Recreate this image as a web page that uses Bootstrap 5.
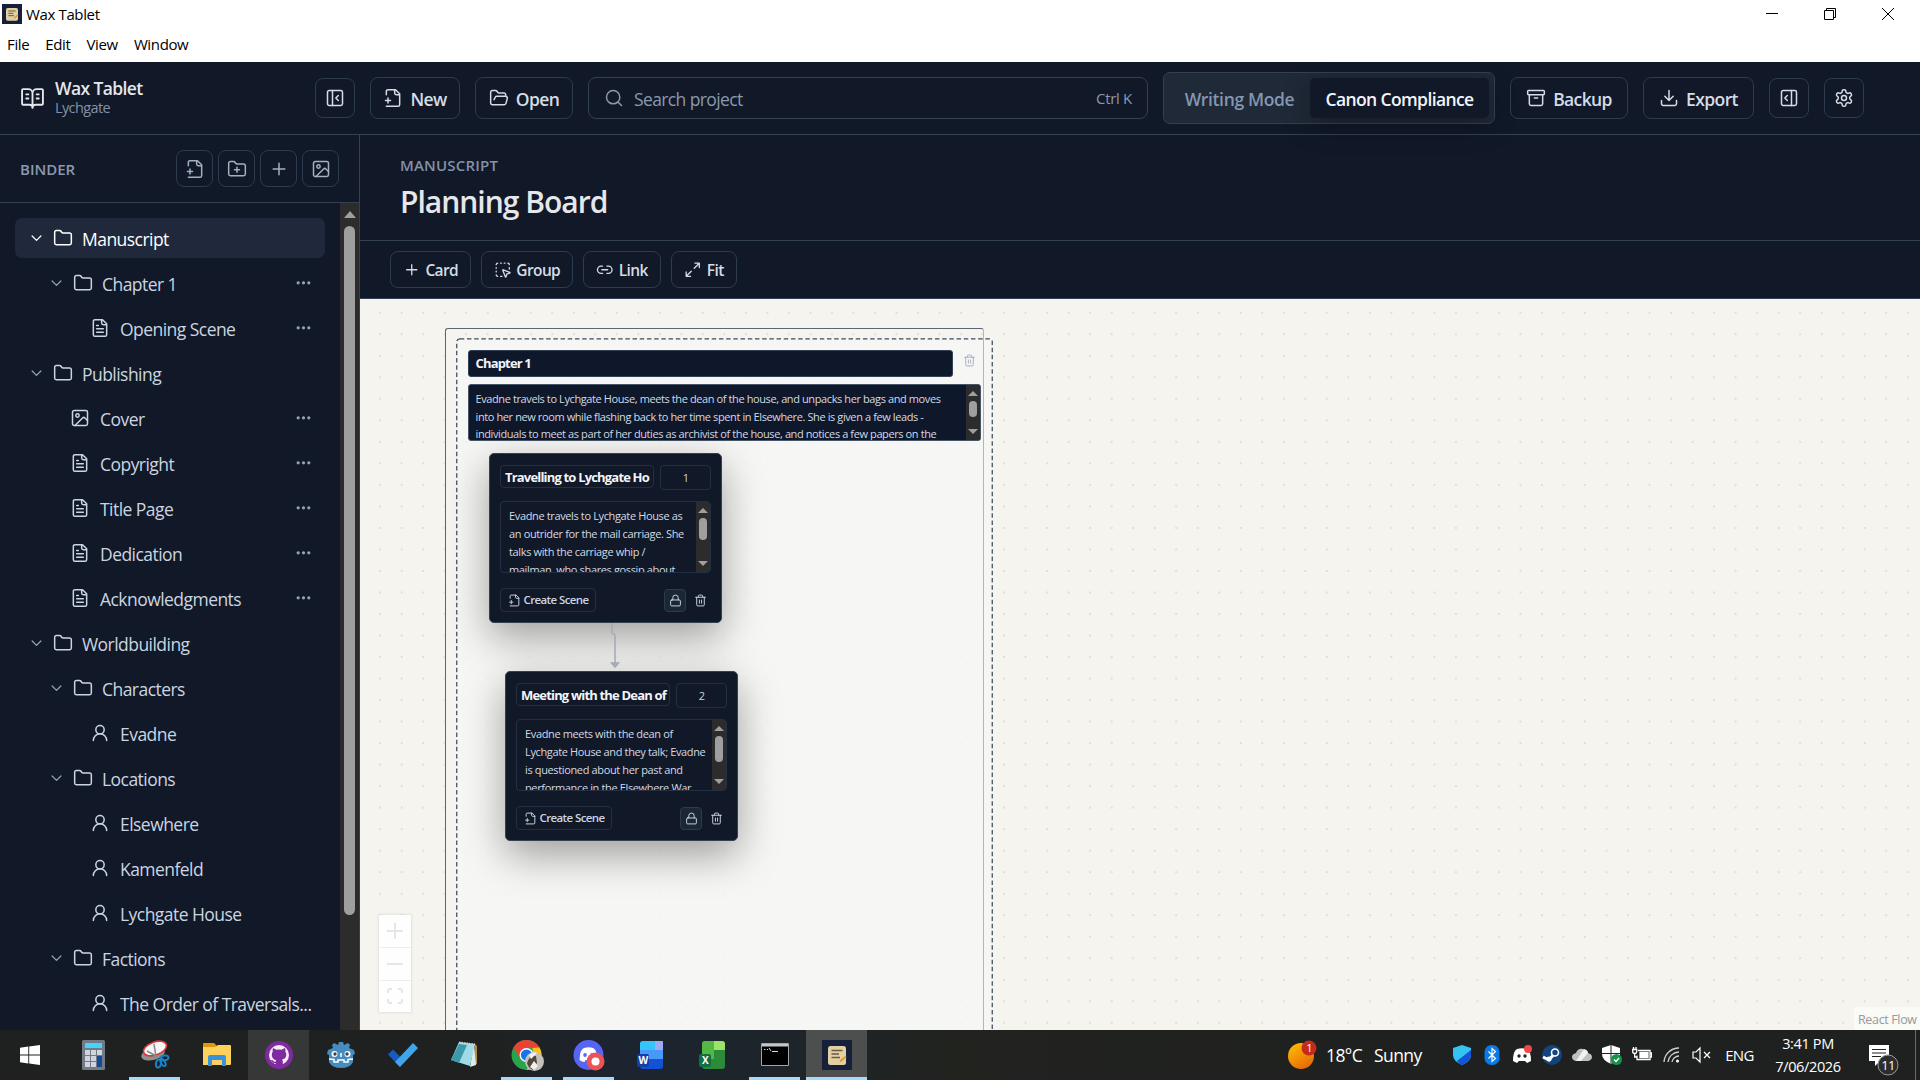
<!DOCTYPE html>
<html lang="en">
<head>
    <meta charset="UTF-8">
    <meta name="viewport" content="width=device-width, initial-scale=1.0">
    <title>Wax Tablet</title>
    <link href="https://cdn.jsdelivr.net/npm/bootstrap@5.3.0/dist/css/bootstrap.min.css" rel="stylesheet">
    <style>
        body {
            width: 1920px;
            height: 1080px;
            overflow: hidden;
            font-family: "Open Sans", "Noto Sans", sans-serif;
            font-size: 17.5px;
            line-height: 1.2;
            letter-spacing: -0.035em;
            color: #cbd5e1;
            background: #111827;
        }
        svg { display: block; flex: none; }
        .ic { width: 20px; height: 20px; fill: none; stroke: currentColor; stroke-width: 1.8; stroke-linecap: round; stroke-linejoin: round; }
        .ic-xl { width: 25px; height: 25px; }
        .ic-md { width: 17.5px; height: 17.5px; }
        .ic-sm { width: 13px; height: 13px; }

        /* window frame */
        .titlebar { height: 62px; background: #fff; color: #000; font-size: 15px; letter-spacing: -0.024em; }
        .titlebar-top { height: 28px; padding: 0 26px 0 2px; }
        .titlebar-menu { padding: 7px 0 0 7px; gap: 16px; }
        .win-controls { gap: 46px; }

        /* app header */
        .app-header { height: 73px; padding: 0 55px 0 20px; border-bottom: 1px solid #334155; }
        .brand { width: 295px; gap: 10px; color: #e5e7eb; }
        .brand-name { font-size: 17.5px; font-weight: 600; line-height: 20px; margin-top: -1px; }
        .brand-sub { font-size: 14.5px; line-height: 19px; color: #8391a8; }
        .header-tools { gap: 15px; }
        .tool-btn { height: 42px; padding: 0; border: 1px solid #2d3b4f; border-radius: 8px; color: #d5dce6; font-size: 17.5px; font-weight: 600; line-height: 1; letter-spacing: inherit; display: flex; align-items: center; justify-content: center; gap: 7px; flex: none; }
        .tool-btn span { padding-top: 3px; }
        .tool-sq { width: 40px; height: 40px; }
        .w-new { width: 90px; } .w-open { width: 98px; } .w-backup { width: 118px; } .w-export { width: 111px; }
        .searchbox { width: 560px; height: 42px; padding: 0 15px 0 15px; border: 1px solid #334155; border-radius: 8px; color: #8b99ae; }
        .search-hint { padding: 3px 0 0 10px; }
        .hotkey { font-size: 15px; letter-spacing: -0.02em; }
        .segmented { width: 332px; height: 52px; padding: 5px; border: 1px solid #334155; border-radius: 7px; background: #1f2937; font-weight: 600; }
        .segmented div { height: 40px; display: flex; align-items: center; justify-content: center; padding-top: 3px; }
        .seg-off { width: 141px; color: #8496b0; letter-spacing: -0.02em; }
        .seg-on { width: 179px; background: #111827; border-radius: 5px; color: #f1f5f9; box-shadow: 0 8px 28px rgba(0, 0, 0, .28); }

        /* binder */
        .main-area { height: 895px; }
        .binder { width: 360px; border-right: 1px solid #334155; }
        .binder-head { height: 68px; padding: 0 20px; border-bottom: 1px solid #334155; color: #8b99ae; font-size: 15px; font-weight: 600; letter-spacing: 0; }
        .binder-tools { gap: 5px; }
        .binder-btn { width: 37px; height: 37px; color: #a4b0c2; }
        .tree { width: 340px; padding: 15px 15px 0; gap: 5px; }
        .tree-row { height: 40px; padding-right: 13px; border-radius: 7px; display: flex; align-items: center; flex: none; white-space: nowrap; letter-spacing: -0.031em; }
        .tree-row span { padding-top: 3px; flex-grow: 1; }
        .tree-row .chev { width: 15px; height: 15px; color: #94a3b8; margin-right: 9px; }
        .tree-row .kind { margin-right: 10px; }
        .tree-row .chev + .kind { margin-right: 9px; }
        .tree-row .dots { width: 17px; height: 17px; color: #94a3b8; }
        .lv0 { padding-left: 14px; }
        .lv1 { padding-left: 34px; }
        .leaf1 { padding-left: 55px; }
        .leaf2 { padding-left: 75px; }
        .tree-row.current { background: #1f293b; color: #fff; }
        .tree-row.current .chev { color: #fff; }
        .scroll-track { width: 19px; background: #2c2c2c; padding-top: 8px; display: flex; flex-direction: column; align-items: center; }
        .scroll-thumb { width: 11px; height: 689px; margin-top: 8px; border-radius: 6px; background: #9f9f9f; }
        .arrow-up { width: 0; height: 0; border: 6.5px solid transparent; border-top: 0; border-bottom: 7px solid #9f9f9f; }
        .arrow-down { width: 0; height: 0; border: 6.5px solid transparent; border-bottom: 0; border-top: 7px solid #9f9f9f; }

        /* page heading and board toolbar */
        .page-head { height: 106px; padding: 20px 40px 0; border-bottom: 1px solid #334155; }
        .eyebrow { font-size: 15px; font-weight: 600; color: #8391a8; line-height: 20px; letter-spacing: 0.012em; }
        .page-title { font-size: 30px; font-weight: 600; line-height: 36px; color: #e5e7eb; margin: 9px 0 0; letter-spacing: -0.033em; }
        .board-tools { height: 58px; padding: 10px 30px 0; gap: 10px; border-bottom: 1px solid #334155; }
        .board-tools .tool-btn { height: 37px; font-size: 15.5px; gap: 5px; }
        .w-card { width: 81px; } .w-group { width: 92px; } .w-link { width: 78px; } .w-fit { width: 66px; }

        /* canvas */
        .board { height: 731px; background-color: #f5f4ef; }
        .board-dots { inset: 0; background-image: radial-gradient(circle, #dfdedd 0.7px, transparent 1.1px); background-size: 21.52px 21.52px; background-position: 9.4px 3px; }
        .node-frame { left: 85px; top: 29px; width: 539px; height: 720px; border: 1.5px solid #5f6474; border-right-color: #b4b5bb; border-radius: 3px; }
        .node-group { left: 96px; top: 39px; width: 537px; height: 720px; background: rgba(246, 246, 245, .8); }
        .group-title { left: 107.5px; top: 51px; width: 485px; height: 27px; padding: 5px 7px; background: #0f172a; border: 1px solid #334155; border-radius: 3px; color: #f1f5f9; font-size: 13px; font-weight: 700; letter-spacing: -0.064em; }
        .group-del { left: 603px; top: 55px; color: #a5b1c2; }
        .group-text { left: 107.5px; top: 85px; width: 513.5px; height: 57px; background: #0f172a; border: 1px solid #475569; border-radius: 3px; overflow: hidden; color: #d3dae4; font-size: 11px; line-height: 17.6px; letter-spacing: -0.036em; white-space: nowrap; }
        .group-text p { padding: 5px 0 0 7px; margin: 0; }
        .mini-track { width: 14px; background: #2c2c2c; padding: 6px 0; display: flex; flex-direction: column; align-items: center; flex: none; }
        .mini-track .arrow-up { border-width: 0 5px 5px; }
        .mini-track .arrow-down { border-width: 5px 5px 0; margin-top: auto; }
        .mini-thumb { width: 8px; margin-top: 5px; border-radius: 4px; background: #9f9f9f; }
        .scene { width: 233px; height: 170px; padding: 11px 10px 0; background: #111827; border: 1px solid #334155; border-radius: 5px; box-shadow: 0 14px 40px rgba(0, 0, 0, .36); }
        .scene-a { left: 129px; top: 154px; }
        .scene-b { left: 145px; top: 372px; }
        .field { border: 1px solid #233044; border-radius: 4px; }
        .scene-title { width: 154px; height: 23px; padding: 3px 4px; overflow: hidden; white-space: nowrap; color: #f1f5f9; font-size: 13px; line-height: 17px; font-weight: 700; letter-spacing: -0.063em; }
        .scene-no { width: 51px; height: 25px; font-size: 11px; padding-top: 5px; text-align: center; }
        .scene-text { height: 72px; margin-top: 11px; overflow: hidden; font-size: 11px; line-height: 18px; letter-spacing: -0.033em; white-space: nowrap; color: #d3dae4; }
        .scene-text p { margin: 0; padding: 5px 0 0 8px; }
        .scene-foot { margin-top: 15px; gap: 8px; }
        .create-btn { width: 96px; height: 24px; font-size: 11.5px; gap: 3px; font-weight: 600; }
        .lock-btn { width: 22px; height: 23px; background: #1c2736; border: 1px solid #2d3b4f; border-radius: 4px; display: flex; align-items: center; justify-content: center; }
        .edge-line { left: 245px; top: 324px; }
        .zoom-ctl { left: 19px; top: 616px; width: 32px; height: 97px; background: #fefefe; box-shadow: 0 0 2px 1px rgba(0, 0, 0, .08); color: #e5e6ea; }
        .zoom-ctl div { height: 32.3px; display: flex; align-items: center; justify-content: center; }
        .zoom-ctl div + div { border-top: 1px solid #eee; }
        .attribution { right: 0; bottom: 0; width: 66px; height: 23px; padding: 5px 0 0 4px; background: rgba(255, 255, 255, .5); color: #999; font-size: 12.5px; letter-spacing: -0.028em; }

        /* taskbar */
        .taskbar { height: 50px; background: linear-gradient(90deg, #1f2121 0, #1f2121 26%, #1c2430 32%, #1d242b 40%, #22231f 50%, #1f2120 70%, #1f2120 100%); color: #fff; }
        .task { width: 61px; margin-right: 1px; display: flex; align-items: center; justify-content: center; flex: none; }
        .task svg { width: 30px; height: 30px; }
        .task-start { width: 60px; margin-right: 2px; }
        .task-start svg { width: 20px; height: 20px; }
        .task.open-app { background: linear-gradient(#a6d8f7, #a6d8f7) center bottom / 51px 3px no-repeat; }
        .task.hot { background-color: #363737; }
        .task.front { background: linear-gradient(#a6d8f7, #a6d8f7) center bottom / 61px 3px no-repeat #4d4e4e; }
        .weather { width: 143px; gap: 8px; font-size: 17.5px; }
        .weather-sky { margin-left: 4px; }
        .tray-ic { width: 30px; display: flex; justify-content: center; }
        .tray-ic svg { width: 20px; height: 20px; }
        .lang { width: 47px; padding-right: 2px; font-size: 15px; text-align: center; }
        .clock { width: 88px; font-size: 14.5px; line-height: 23.5px; text-align: center; letter-spacing: -0.025em; }
        .notif { margin-left: 9px; }
    </style>
</head>
<body class="d-flex flex-column">
    <svg width="0" height="0" class="position-absolute">
        <symbol id="book" viewBox="0 0 24 24"><path d="M12 7v14M16 12h2M16 8h2M3 18a1 1 0 0 1-1-1V4a1 1 0 0 1 1-1h5a4 4 0 0 1 4 4 4 4 0 0 1 4-4h5a1 1 0 0 1 1 1v13a1 1 0 0 1-1 1h-6a3 3 0 0 0-3 3 3 3 0 0 0-3-3zM6 12h2M6 8h2"/></symbol>
        <symbol id="panel-left" viewBox="0 0 24 24"><rect width="18" height="18" x="3" y="3" rx="2"/><path d="M9 3v18M16 15l-3-3 3-3"/></symbol>
        <symbol id="panel-right" viewBox="0 0 24 24"><rect width="18" height="18" x="3" y="3" rx="2"/><path d="M15 3v18M10 15l-3-3 3-3"/></symbol>
        <symbol id="file-plus" viewBox="0 0 24 24"><path d="M4 22h14a2 2 0 0 0 2-2V7l-5-5H6a2 2 0 0 0-2 2v4M14 2v4a2 2 0 0 0 2 2h4M3 15h6M6 12v6"/></symbol>
        <symbol id="folder-open" viewBox="0 0 24 24"><path d="m6 14 1.5-2.9A2 2 0 0 1 9.24 10H20a2 2 0 0 1 1.94 2.5l-1.54 6a2 2 0 0 1-1.95 1.5H4a2 2 0 0 1-2-2V5a2 2 0 0 1 2-2h3.9a2 2 0 0 1 1.69.9l.81 1.2a2 2 0 0 0 1.67.9H18a2 2 0 0 1 2 2v2"/></symbol>
        <symbol id="folder" viewBox="0 0 24 24"><path d="M20 20a2 2 0 0 0 2-2V8a2 2 0 0 0-2-2h-7.9a2 2 0 0 1-1.69-.9L9.6 3.9A2 2 0 0 0 7.93 3H4a2 2 0 0 0-2 2v13a2 2 0 0 0 2 2Z"/></symbol>
        <symbol id="folder-plus" viewBox="0 0 24 24"><path d="M20 20a2 2 0 0 0 2-2V8a2 2 0 0 0-2-2h-7.9a2 2 0 0 1-1.69-.9L9.6 3.9A2 2 0 0 0 7.93 3H4a2 2 0 0 0-2 2v13a2 2 0 0 0 2 2ZM12 10v6M9 13h6"/></symbol>
        <symbol id="plus" viewBox="0 0 24 24"><path d="M5 12h14M12 5v14"/></symbol>
        <symbol id="search" viewBox="0 0 24 24"><circle cx="11" cy="11" r="8"/><path d="m21 21-4.3-4.3"/></symbol>
        <symbol id="archive" viewBox="0 0 24 24"><rect width="20" height="5" x="2" y="3" rx="1"/><path d="M4 8v11a2 2 0 0 0 2 2h12a2 2 0 0 0 2-2V8M10 12h4"/></symbol>
        <symbol id="download" viewBox="0 0 24 24"><path d="M21 15v4a2 2 0 0 1-2 2H5a2 2 0 0 1-2-2v-4M7 10l5 5 5-5M12 15V3"/></symbol>
        <symbol id="gear" viewBox="0 0 24 24"><path d="M12.22 2h-.44a2 2 0 0 0-2 2v.18a2 2 0 0 1-1 1.73l-.43.25a2 2 0 0 1-2 0l-.15-.08a2 2 0 0 0-2.73.73l-.22.38a2 2 0 0 0 .73 2.73l.15.1a2 2 0 0 1 1 1.72v.51a2 2 0 0 1-1 1.74l-.15.09a2 2 0 0 0-.73 2.73l.22.38a2 2 0 0 0 2.73.73l.15-.08a2 2 0 0 1 2 0l.43.25a2 2 0 0 1 1 1.73V20a2 2 0 0 0 2 2h.44a2 2 0 0 0 2-2v-.18a2 2 0 0 1 1-1.73l.43-.25a2 2 0 0 1 2 0l.15.08a2 2 0 0 0 2.73-.73l.22-.39a2 2 0 0 0-.73-2.73l-.15-.08a2 2 0 0 1-1-1.74v-.5a2 2 0 0 1 1-1.74l.15-.09a2 2 0 0 0 .73-2.73l-.22-.38a2 2 0 0 0-2.73-.73l-.15.08a2 2 0 0 1-2 0l-.43-.25a2 2 0 0 1-1-1.73V4a2 2 0 0 0-2-2z"/><circle cx="12" cy="12" r="3"/></symbol>
        <symbol id="image" viewBox="0 0 24 24"><rect width="18" height="18" x="3" y="3" rx="2"/><circle cx="9" cy="9" r="2"/><path d="m21 15-3.086-3.086a2 2 0 0 0-2.828 0L6 21"/></symbol>
        <symbol id="file-text" viewBox="0 0 24 24"><path d="M15 2H6a2 2 0 0 0-2 2v16a2 2 0 0 0 2 2h12a2 2 0 0 0 2-2V7ZM14 2v4a2 2 0 0 0 2 2h4M10 9H8M16 13H8M16 17H8"/></symbol>
        <symbol id="person" viewBox="0 0 24 24"><circle cx="12" cy="8" r="5"/><path d="M20 21a8 8 0 0 0-16 0"/></symbol>
        <symbol id="chevron" viewBox="0 0 24 24"><path d="m5 8 7 7 7-7" stroke-width="2"/></symbol>
        <symbol id="dots" viewBox="0 0 24 24"><g fill="currentColor"><circle cx="12" cy="11" r="1.4"/><circle cx="19.500" cy="11" r="1.4"/><circle cx="4.500" cy="11" r="1.4"/></g></symbol>
        <symbol id="select" viewBox="0 0 24 24"><path d="M12.034 12.681a.498.498 0 0 1 .647-.647l9 3.5a.5.5 0 0 1-.033.943l-3.444 1.068a1 1 0 0 0-.66.66l-1.067 3.443a.5.5 0 0 1-.943.033zM5 3a2 2 0 0 0-2 2M19 3a2 2 0 0 1 2 2M5 21a2 2 0 0 1-2-2M9 3h1M9 21h2M14 3h1M3 9v1M21 9v2M3 14v1"/></symbol>
        <symbol id="link" viewBox="0 0 24 24"><path d="M9 17H7A5 5 0 0 1 7 7h2M15 7h2a5 5 0 1 1 0 10h-2M8 12h8"/></symbol>
        <symbol id="expand" viewBox="0 0 24 24"><path d="M15 3h6v6M9 21H3v-6M21 3l-7 7M3 21l7-7"/></symbol>
        <symbol id="trash" viewBox="0 0 24 24"><path d="M3 6h18M19 6v14a2 2 0 0 1-2 2H7a2 2 0 0 1-2-2V6M8 6V4a2 2 0 0 1 2-2h4a2 2 0 0 1 2 2v2M10 11v6M14 11v6"/></symbol>
        <symbol id="lock" viewBox="0 0 24 24"><rect width="18" height="11" x="3" y="11" rx="2"/><path d="M7 11V7a5 5 0 0 1 10 0v4"/></symbol>
        <symbol id="app-logo" viewBox="0 0 30 30"><path fill="#16203a" d="M0 0h30v30H0z"/><rect x="6" y="6" width="18" height="19" rx="2.5" fill="#e3cfa4"/><path d="M9.500 10.500h11M9.500 14h7.500M9.500 17.500h8.500" stroke="#6b5b41" stroke-width="1.500"/><path d="M18 21.500l6-5" stroke="#d99a35" stroke-width="2"/></symbol>
    </svg>

    <div class="titlebar flex-shrink-0">
        <div class="titlebar-top d-flex align-items-center justify-content-between">
            <div class="d-flex align-items-center gap-1"><svg width="20" height="20"><use href="#app-logo"/></svg><span>Wax Tablet</span></div>
            <div class="win-controls d-flex align-items-center">
                <svg width="12" height="12" stroke="#000"><path d="M0 5.500h12"/></svg>
                <svg width="12" height="12" stroke="#000" fill="none"><path d="M.5 2.500h9v9h-9zM2.500 2.500v-2h9v9h-2"/></svg>
                <svg width="12" height="12" stroke="#000"><path d="M0 0l12 12M12 0L0 12"/></svg>
            </div>
        </div>
        <div class="titlebar-menu d-flex"><span>File</span><span>Edit</span><span>View</span><span>Window</span></div>
    </div>

    <header class="app-header d-flex align-items-center flex-shrink-0">
        <div class="brand d-flex align-items-center flex-shrink-0">
            <svg class="ic ic-xl"><use href="#book"/></svg>
            <div><div class="brand-name">Wax Tablet</div><div class="brand-sub">Lychgate</div></div>
        </div>
        <div class="header-tools d-flex align-items-center">
            <button class="btn tool-btn tool-sq"><svg class="ic"><use href="#panel-left"/></svg></button>
            <button class="btn tool-btn w-new"><svg class="ic"><use href="#file-plus"/></svg><span>New</span></button>
            <button class="btn tool-btn w-open"><svg class="ic"><use href="#folder-open"/></svg><span>Open</span></button>
            <div class="searchbox d-flex align-items-center flex-shrink-0">
                <svg class="ic"><use href="#search"/></svg>
                <span class="search-hint flex-grow-1">Search project</span><span class="hotkey">Ctrl K</span>
            </div>
            <div class="segmented d-flex flex-shrink-0"><div class="seg-off">Writing Mode</div><div class="seg-on">Canon Compliance</div></div>
            <button class="btn tool-btn w-backup"><svg class="ic"><use href="#archive"/></svg><span>Backup</span></button>
            <button class="btn tool-btn w-export"><svg class="ic"><use href="#download"/></svg><span>Export</span></button>
            <button class="btn tool-btn tool-sq"><svg class="ic"><use href="#panel-right"/></svg></button>
            <button class="btn tool-btn tool-sq"><svg class="ic"><use href="#gear"/></svg></button>
        </div>
    </header>

    <div class="main-area d-flex flex-shrink-0">
        <aside class="binder d-flex flex-column flex-shrink-0">
            <div class="binder-head d-flex align-items-center justify-content-between flex-shrink-0">
                <span>BINDER</span>
                <div class="binder-tools d-flex">
                    <button class="btn tool-btn binder-btn"><svg class="ic"><use href="#file-plus"/></svg></button>
                    <button class="btn tool-btn binder-btn"><svg class="ic"><use href="#folder-plus"/></svg></button>
                    <button class="btn tool-btn binder-btn"><svg class="ic"><use href="#plus"/></svg></button>
                    <button class="btn tool-btn binder-btn"><svg class="ic"><use href="#image"/></svg></button>
                </div>
            </div>
            <div class="d-flex flex-grow-1 overflow-hidden">
                <div class="tree d-flex flex-column flex-shrink-0">
                    <div class="tree-row lv0 current"><svg class="ic chev"><use href="#chevron"/></svg><svg class="ic kind"><use href="#folder"/></svg><span>Manuscript</span></div>
                    <div class="tree-row lv1"><svg class="ic chev"><use href="#chevron"/></svg><svg class="ic kind"><use href="#folder"/></svg><span>Chapter 1</span><svg class="ic dots"><use href="#dots"/></svg></div>
                    <div class="tree-row leaf2"><svg class="ic kind"><use href="#file-text"/></svg><span>Opening Scene</span><svg class="ic dots"><use href="#dots"/></svg></div>
                    <div class="tree-row lv0"><svg class="ic chev"><use href="#chevron"/></svg><svg class="ic kind"><use href="#folder"/></svg><span>Publishing</span></div>
                    <div class="tree-row leaf1"><svg class="ic kind"><use href="#image"/></svg><span>Cover</span><svg class="ic dots"><use href="#dots"/></svg></div>
                    <div class="tree-row leaf1"><svg class="ic kind"><use href="#file-text"/></svg><span>Copyright</span><svg class="ic dots"><use href="#dots"/></svg></div>
                    <div class="tree-row leaf1"><svg class="ic kind"><use href="#file-text"/></svg><span>Title Page</span><svg class="ic dots"><use href="#dots"/></svg></div>
                    <div class="tree-row leaf1"><svg class="ic kind"><use href="#file-text"/></svg><span>Dedication</span><svg class="ic dots"><use href="#dots"/></svg></div>
                    <div class="tree-row leaf1"><svg class="ic kind"><use href="#file-text"/></svg><span>Acknowledgments</span><svg class="ic dots"><use href="#dots"/></svg></div>
                    <div class="tree-row lv0"><svg class="ic chev"><use href="#chevron"/></svg><svg class="ic kind"><use href="#folder"/></svg><span>Worldbuilding</span></div>
                    <div class="tree-row lv1"><svg class="ic chev"><use href="#chevron"/></svg><svg class="ic kind"><use href="#folder"/></svg><span>Characters</span></div>
                    <div class="tree-row leaf2"><svg class="ic kind"><use href="#person"/></svg><span>Evadne</span></div>
                    <div class="tree-row lv1"><svg class="ic chev"><use href="#chevron"/></svg><svg class="ic kind"><use href="#folder"/></svg><span>Locations</span></div>
                    <div class="tree-row leaf2"><svg class="ic kind"><use href="#person"/></svg><span>Elsewhere</span></div>
                    <div class="tree-row leaf2"><svg class="ic kind"><use href="#person"/></svg><span>Kamenfeld</span></div>
                    <div class="tree-row leaf2"><svg class="ic kind"><use href="#person"/></svg><span>Lychgate House</span></div>
                    <div class="tree-row lv1"><svg class="ic chev"><use href="#chevron"/></svg><svg class="ic kind"><use href="#folder"/></svg><span>Factions</span></div>
                    <div class="tree-row leaf2"><svg class="ic kind"><use href="#person"/></svg><span>The Order of Traversals...</span></div>
                </div>
                <div class="scroll-track"><div class="arrow-up"></div><div class="scroll-thumb"></div></div>
            </div>
        </aside>

        <main class="flex-grow-1">
            <div class="page-head">
                <div class="eyebrow">MANUSCRIPT</div>
                <h1 class="page-title">Planning Board</h1>
            </div>
            <div class="board-tools d-flex">
                <button class="btn tool-btn w-card"><svg class="ic ic-md"><use href="#plus"/></svg><span>Card</span></button>
                <button class="btn tool-btn w-group"><svg class="ic ic-md"><use href="#select"/></svg><span>Group</span></button>
                <button class="btn tool-btn w-link"><svg class="ic ic-md"><use href="#link"/></svg><span>Link</span></button>
                <button class="btn tool-btn w-fit"><svg class="ic ic-md"><use href="#expand"/></svg><span>Fit</span></button>
            </div>
            <div class="board position-relative overflow-hidden">
                <div class="board-dots position-absolute"></div>
                <svg class="node-group position-absolute" fill="none" stroke="#3f4a5e" stroke-width="1.250"><rect x=".75" y=".75" width="535.500" height="740" rx="3" stroke-dasharray="4.500 2.700"/></svg>
                <div class="node-frame position-absolute"></div>
                <div class="group-title position-absolute">Chapter 1</div>
                <svg class="ic ic-sm group-del position-absolute"><use href="#trash"/></svg>
                <div class="group-text position-absolute d-flex">
                    <p class="flex-grow-1">Evadne travels to Lychgate House, meets the dean of the house, and unpacks her bags and moves<br>into her new room while flashing back to her time spent in Elsewhere. She is given a few leads -<br>individuals to meet as part of her duties as archivist of the house, and notices a few papers on the</p>
                    <div class="mini-track"><div class="arrow-up"></div><div class="mini-thumb" style="height:16px"></div><div class="arrow-down"></div></div>
                </div>
                <div class="scene scene-a position-absolute">
                    <div class="d-flex justify-content-between"><div class="field scene-title">Travelling to Lychgate Ho</div><div class="field scene-no">1</div></div>
                    <div class="field scene-text d-flex">
                        <p class="flex-grow-1">Evadne travels to Lychgate House as<br>an outrider for the mail carriage. She<br>talks with the carriage whip /<br>mailman, who shares gossip about</p>
                        <div class="mini-track"><div class="arrow-up"></div><div class="mini-thumb" style="height:22px"></div><div class="arrow-down"></div></div>
                    </div>
                    <div class="scene-foot d-flex align-items-center">
                        <div class="field create-btn d-flex align-items-center justify-content-center me-auto"><svg class="ic ic-sm"><use href="#file-plus"/></svg>Create Scene</div>
                        <div class="lock-btn"><svg class="ic ic-sm"><use href="#lock"/></svg></div>
                        <svg class="ic ic-sm me-1"><use href="#trash"/></svg>
                    </div>
                </div>
                <div class="scene scene-b position-absolute">
                    <div class="d-flex justify-content-between"><div class="field scene-title">Meeting with the Dean of</div><div class="field scene-no">2</div></div>
                    <div class="field scene-text d-flex">
                        <p class="flex-grow-1">Evadne meets with the dean of<br>Lychgate House and they talk; Evadne<br>is questioned about her past and<br>performance in the Elsewhere War.</p>
                        <div class="mini-track"><div class="arrow-up"></div><div class="mini-thumb" style="height:26px"></div><div class="arrow-down"></div></div>
                    </div>
                    <div class="scene-foot d-flex align-items-center">
                        <div class="field create-btn d-flex align-items-center justify-content-center me-auto"><svg class="ic ic-sm"><use href="#file-plus"/></svg>Create Scene</div>
                        <div class="lock-btn"><svg class="ic ic-sm"><use href="#lock"/></svg></div>
                        <svg class="ic ic-sm me-1"><use href="#trash"/></svg>
                    </div>
                </div>
                <svg class="edge-line position-absolute" width="20" height="48" fill="none" stroke="#a3a9b5" stroke-width="1.500"><path d="M7 0v9q0 2 1.500 2t1.500 2v28"/><path d="M6.500 40h7l-3.500 4z" fill="#a9afba"/></svg>
                <div class="zoom-ctl position-absolute">
                    <div><svg width="16" height="16" stroke="currentColor" stroke-width="2"><path d="M0 8h16M8 0v16"/></svg></div>
                    <div><svg width="16" height="16" stroke="currentColor" stroke-width="2"><path d="M0 8h16"/></svg></div>
                    <div><svg width="16" height="16" fill="none" stroke="currentColor" stroke-width="2"><path d="M1 5V3q0-2 2-2h2M11 1h2q2 0 2 2v2M15 11v2q0 2-2 2h-2M5 15H3q-2 0-2-2v-2"/></svg></div>
                </div>
                <div class="attribution position-absolute">React Flow</div>
            </div>
        </main>
    </div>

    <footer class="taskbar d-flex flex-shrink-0">
        <div class="task task-start"><svg viewBox="0 0 20 20" fill="#fff"><path d="M0 2.800l8.300-1.200v8H0zM9.200 1.400L20 0v9.600H9.200zM0 10.500h8.300v8L0 17.300zM9.200 10.500H20V20L9.200 18.500z"/></svg></div>
        <div class="task"><svg viewBox="0 0 30 30"><rect x="4" width="23" height="30" rx="1.500" fill="#727a85"/><path fill="#46d3f7" d="M7 3h17v5H7z"/><path fill="#cfd5dd" d="M7 10h5v5H7zM13 10h5v5h-5zM19 10h5v5h-5zM7 16h5v5H7zM13 16h5v5h-5zM7 22h5v5H7zM13 22h5v5h-5z"/><path fill="#124a96" d="M19 16h5v11h-5z"/></svg></div>
        <div class="task open-app"><svg viewBox="0 0 30 30"><ellipse cx="13" cy="14" rx="12" ry="6" transform="rotate(-14 13 14)" fill="#8d9093"/><ellipse cx="15" cy="8.500" rx="12" ry="6.500" transform="rotate(-20 15 8.500)" fill="#f7f7f7" stroke="#d9363a" stroke-width="1.600"/><path d="M14 4l2 13M7 11l9 5" stroke="#85878a" stroke-width="1.500"/><g fill="none" stroke="#1c80c4" stroke-width="2"><ellipse cx="24.500" cy="18" rx="4" ry="2.500" transform="rotate(-10 24.500 18)"/><ellipse cx="18.500" cy="23.500" rx="2.500" ry="4" transform="rotate(10 18.500 23.500)"/><ellipse cx="23" cy="22.500" rx="2" ry="4" transform="rotate(-30 23 22.500)"/></g></svg></div>
        <div class="task"><svg viewBox="0 0 30 30"><path fill="#dd9a06" d="M1 4q0-1 1-1h10l3 3v5H1z"/><path fill="#fdd15c" d="M1 7h12l3-2h12q1 0 1 1v18q0 1-1 1H1z"/><path fill="#3a92dd" d="M6 26V17q0-2 2-2h14q2 0 2 2v9h-4v-6H10v6z"/></svg></div>
        <div class="task hot"><svg viewBox="0 0 30 30"><circle cx="15" cy="15" r="14" fill="#7f2b9f"/><circle cx="15" cy="15" r="10" fill="#f3edf6"/><path fill="#7f2b9f" d="M9 8l3.500 1.800q2.500-.6 5 0L21 8q.8 2 .3 3.500Q22.500 13 22.300 15q-.4 4-4.300 4.500.8 1 .8 2.200V25h-7.200v-2q-2.600.5-3.700-1.500l-1-1.500q2-.2 2.700 1.200.8 1 2 .5l.7-1.200Q8 19 7.800 15q-.1-2 1-3.500Q8.300 10 9 8z"/></svg></div>
        <div class="task"><svg viewBox="0 0 30 30"><path fill="#478cbf" d="M13 2h4l1 3 4-2 2 2-1 3 5 2 1 4-2 1v7q-3 6-12 6T3 22v-7l-2-1 1-4 5-2-1-3 2-2 4 2z"/><circle cx="8.500" cy="14" r="3" fill="#fff"/><circle cx="21.500" cy="14" r="3" fill="#fff"/><circle cx="9" cy="14" r="1.700" fill="#414042"/><circle cx="21" cy="14" r="1.700" fill="#414042"/><path d="M15 13v4M3 19l5 .5v2.500h4v-2h6v2h4v-2.500l5-.5" stroke="#fff" stroke-width="1.500" fill="none"/></svg></div>
        <div class="task"><svg viewBox="0 0 30 30"><path fill="#185abd" d="M0 14.500l5-5 7 7v10.500z"/><path fill="#41a5ee" d="M7 22L25 3l5 5-18 19z"/></svg></div>
        <div class="task"><svg viewBox="0 0 30 30"><path fill="#b98a45" d="M25 4l2 2v18l-4 1z"/><path fill="#9fdbe6" d="M9 2l16 2-5 22L1 20z"/><path fill="#3c99a8" d="M9 4L1 20l8 3 8-18z"/><path fill="#d7ecef" d="M24 5l2 20-6 2z"/><path d="M9 2.500l16 2" stroke="#ccd3d5" stroke-width="2" stroke-dasharray="1.500 1"/></svg></div>
        <div class="task open-app"><svg viewBox="0 0 30 30" class="overflow-visible"><circle cx="14.500" cy="15" r="15" fill="#2ba24c"/><path fill="#ea4335" d="M1.500 7.500a15 15 0 0 1 26 0L14.500 8 9 19z"/><path fill="#fbc116" d="M27.500 7.500a15 15 0 0 1-13 22.500l7-11-1-11z"/><circle cx="14.500" cy="15" r="7" fill="#fff"/><circle cx="14.500" cy="15" r="5.600" fill="#1a73e8"/><circle cx="22.500" cy="21.500" r="9.500" fill="#c4c1ba"/><path fill="#53473f" d="M15 23q3-9 9-7l1 7-4 7q-5-2-6-7z"/><path fill="#f2f0ec" d="M17 15q4-4 8-2l-6 6zM22 21l4 5-4 4-4-3z"/></svg></div>
        <div class="task open-app"><svg viewBox="0 0 30 30" class="overflow-visible"><circle cx="14.500" cy="15" r="15" fill="#5865f2"/><path fill="#fff" d="M10 8q5-1.500 9 0 4 1 4 12-2 2-4.500 2l-1-2h-6l-1 2Q8 22 5.500 20 6 9 10 8z"/><ellipse cx="11" cy="15" rx="1.800" ry="2" fill="#5865f2"/><ellipse cx="18" cy="15" rx="1.800" ry="2" fill="#5865f2"/><circle cx="21.500" cy="21.500" r="9" fill="#ed5257"/><circle cx="21.500" cy="21.500" r="4" fill="#fff"/></svg></div>
        <div class="task"><svg viewBox="0 0 30 30"><rect x="4" y="1" width="23" height="28" rx="3" fill="#1551d4"/><path fill="#37c4fb" d="M7 1h20v9H4V4q0-3 3-3z"/><path fill="#a2a9f4" d="M19 1h5q3 0 3 3v6h-8z"/><path fill="#4898f8" d="M4 10h23v9H4z"/><rect x="1" y="14" width="12" height="13" rx="2" fill="#1140ad"/><text x="7" y="24" text-anchor="middle" font-size="10" font-weight="700" fill="#fff">W</text></svg></div>
        <div class="task"><svg viewBox="0 0 30 30"><rect x="4" y="1" width="23" height="28" rx="3" fill="#2c8a38"/><path fill="#53b845" d="M7 1h9v18H4V4q0-3 3-3z"/><path fill="#9be46b" d="M16 1h8q3 0 3 3v6H16z"/><rect x="1" y="14" width="12" height="13" rx="2" fill="#11703f"/><text x="7" y="24" text-anchor="middle" font-size="10" font-weight="700" fill="#fff">X</text></svg></div>
        <div class="task open-app"><svg viewBox="0 0 30 30"><path fill="#000" stroke="#9fa5a9" d="M1.500 3.500h27v22h-27z"/><path fill="#c3c7ca" d="M2 4h26v2.500H2z"/><path d="M4 9.500h1.500M7 9.500h1M9 8l2 3M12 11.500h6" stroke="#ddd"/></svg></div>
        <div class="task front"><svg><use href="#app-logo"/></svg></div>

        <div class="ms-auto d-flex align-items-center">
            <div class="weather d-flex align-items-center"><svg width="30" height="30"><defs><linearGradient id="sun" x2=".6" y2="1"><stop stop-color="#ffc400"/><stop offset="1" stop-color="#ea6a0a"/></linearGradient></defs><circle cx="13" cy="16" r="13" fill="url(#sun)"/><circle cx="21" cy="8" r="7.500" fill="#c42b1c"/><text x="21" y="12" text-anchor="middle" font-size="11" fill="#fff">1</text></svg><span>18°C</span><span class="weather-sky">Sunny</span></div>
            <div class="tray-ic ms-3"><svg viewBox="0 0 20 20"><path fill="#35c3f1" d="M10 0l9 3v7q0 6-9 10Q1 16 1 10V3z"/><path fill="#1653d6" d="M19 5v5q0 6-9 10-3-1-5-4z"/></svg></div>
            <div class="tray-ic"><svg viewBox="0 0 20 20"><rect x="2.500" width="15" height="20" rx="7" fill="#0a7be6"/><path d="M6.500 6.500l7 7L10 16.500v-13l3.500 3-7 7" fill="none" stroke="#fff" stroke-width="1.200"/></svg></div>
            <div class="tray-ic"><svg viewBox="0 0 20 20"><path fill="#fff" d="M5 4q5-1.500 10 0 4 2 4 12l-4 2-2-2H7l-2 2-4-2Q1 6 5 4z"/><circle cx="7" cy="11" r="1.700" fill="#222"/><circle cx="13" cy="11" r="1.700" fill="#222"/><circle cx="16" cy="4" r="4" fill="#f04747"/></svg></div>
            <div class="tray-ic"><svg viewBox="0 0 20 20"><circle cx="10" cy="10" r="10" fill="#12457e"/><path d="M1 12l6 3 6-7" stroke="#fff" stroke-width="3" fill="none"/><circle cx="13" cy="7.500" r="3.500" fill="#12457e" stroke="#fff" stroke-width="1.600"/><circle cx="7" cy="14" r="2.500" fill="#fff"/></svg></div>
            <div class="tray-ic"><svg viewBox="0 0 20 20"><path fill="#bdbfc1" d="M4 16q-4-1-4-4t4-4q2-5 7-4 4 1 5 4 4 1 4 4t-4 4z"/><path fill="#f1f1f1" d="M4 16l8-12q4 1 4 4L9 16z"/></svg></div>
            <div class="tray-ic"><svg viewBox="0 0 20 20"><path fill="#fff" d="M9 0l9 3v6q0 6-9 10Q0 15 0 9V3z"/><path d="M9 0v19M0 8.500h18" stroke="#222"/><circle cx="14.500" cy="14.500" r="5.500" fill="#16934a"/><path d="M12 14.500l2 2 3-3.500" stroke="#fff" stroke-width="1.300" fill="none"/></svg></div>
            <div class="tray-ic"><svg viewBox="0 0 20 20" fill="none" stroke="#fff" stroke-width="1.300"><path d="M6 5.500h12v9H5v-4M18 8h1.500v4H18M.7 4.500v2q0 2 2 2t2-2v-2zM1.500 2v2.500M4 2v2.500M2.700 8.500V12H5"/><path fill="#fff" d="M8 7.500h8v5H8z"/></svg></div>
            <div class="tray-ic"><svg viewBox="0 0 20 20" fill="none" stroke="#cfcfcf" stroke-width="1.300"><path d="M2 17A15 15 0 0 1 17 3M6 17A11 11 0 0 1 17 7M10 17a7 7 0 0 1 7-6" /><circle cx="15.500" cy="16" r="1.500" fill="#fff" stroke="none"/></svg></div>
            <div class="tray-ic"><svg viewBox="0 0 20 20" fill="none" stroke="#fff" stroke-width="1.200"><path d="M1 7h3l4-4v14l-4-4H1zM12 7l6 6M18 7l-6 6"/></svg></div>
            <div class="lang">ENG</div>
            <div class="clock">3:41 PM<br>7/06/2026</div>
            <svg class="notif" width="54" height="50"><path fill="#fff" d="M8 15h20v16H19l-5 5v-5H8z"/><path d="M11 19.500h14M11 23h14M11 26.500h9" stroke="#222"/><circle cx="27" cy="35" r="10" fill="#2c2d2d" stroke="#999"/><text x="27" y="40" text-anchor="middle" font-size="13" fill="#fff">11</text></svg>
            <svg width="5" height="50" stroke="#6b6c6c"><path d="M.5 0v50"/></svg>
        </div>
    </footer>
    <script src="https://cdn.jsdelivr.net/npm/bootstrap@5.3.0/dist/js/bootstrap.bundle.min.js"></script>
</body>
</html>
